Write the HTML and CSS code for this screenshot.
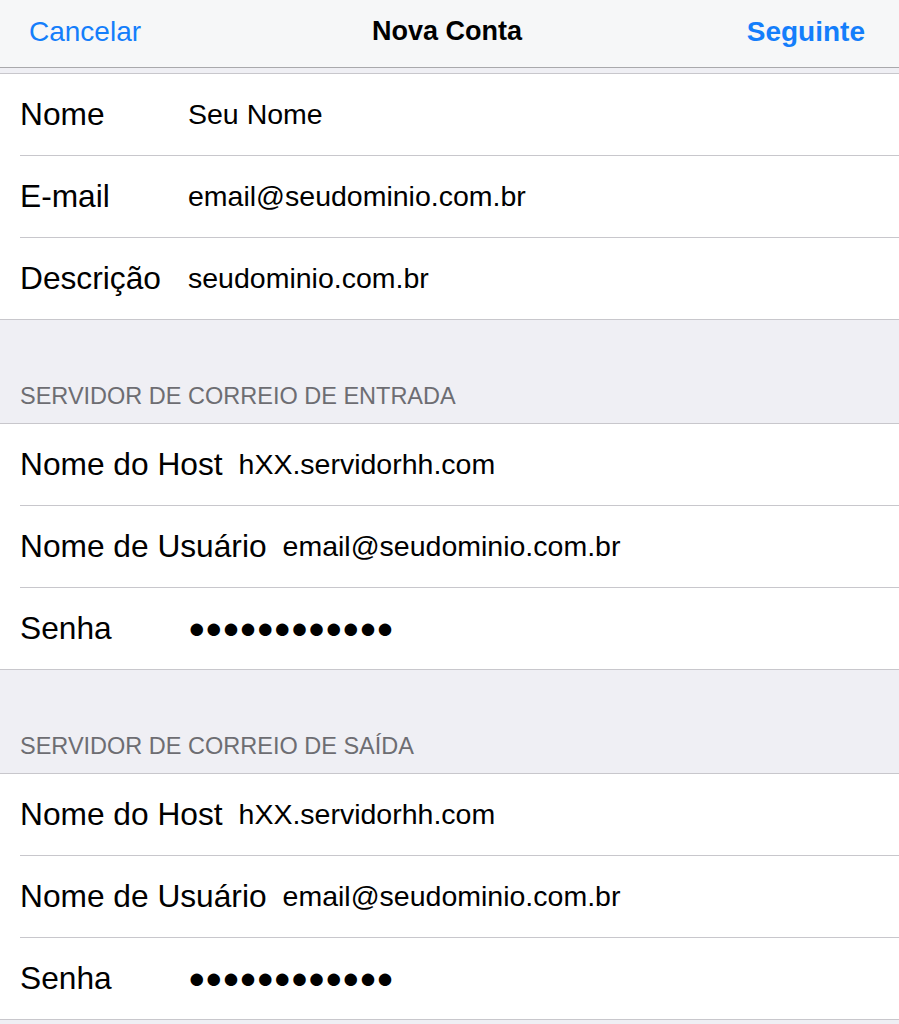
FILE: index.html
```html
<!DOCTYPE html>
<html lang="pt-BR">
<head>
  <meta charset="UTF-8" />
  <meta name="viewport" content="width=device-width, initial-scale=1.0" />
  <title>Nova Conta</title>
  <link rel="stylesheet" href="styles.css">
</head>
<body>
  <!-- barra de navegação -->
  <header class="nav-bar">
    <a href="#" class="nav-btn nav-cancel">Cancelar</a>
    <h1 class="nav-title">Nova Conta</h1>
    <a href="#" class="nav-btn nav-next">Seguinte</a>
  </header>

  <div class="top-gap"></div>

  <!-- dados da conta -->
  <section class="group">
    <div class="row"><div class="row-inner"><span class="label">Nome</span><span class="value">Seu Nome</span></div></div>
    <div class="row"><div class="row-inner"><span class="label">E-mail</span><span class="value">email@seudominio.com.br</span></div></div>
    <div class="row"><div class="row-inner"><span class="label">Descrição</span><span class="value">seudominio.com.br</span></div></div>
  </section>

  <!-- entrada -->
  <h2 class="section-title">SERVIDOR DE CORREIO DE ENTRADA</h2>
  <section class="group">
    <div class="row"><div class="row-inner"><span class="label">Nome do Host</span><span class="value">hXX.servidorhh.com</span></div></div>
    <div class="row"><div class="row-inner"><span class="label">Nome de Usuário</span><span class="value">email@seudominio.com.br</span></div></div>
    <div class="row"><div class="row-inner"><span class="label">Senha</span><span class="value dots">●●●●●●●●●●●●</span></div></div>
  </section>

  <!-- saída -->
  <h2 class="section-title">SERVIDOR DE CORREIO DE SAÍDA</h2>
  <section class="group">
    <div class="row"><div class="row-inner"><span class="label">Nome do Host</span><span class="value">hXX.servidorhh.com</span></div></div>
    <div class="row"><div class="row-inner"><span class="label">Nome de Usuário</span><span class="value">email@seudominio.com.br</span></div></div>
    <div class="row"><div class="row-inner"><span class="label">Senha</span><span class="value dots">●●●●●●●●●●●●</span></div></div>
  </section>
</body>
</html>
```

FILE: styles.css
```css
body{margin:0;background:#efeff4;font-family:"Liberation Sans",Arial,sans-serif;color:#000;}

.nav-bar{display:grid;grid-template-columns:1fr auto 1fr;align-items:center;height:63px;padding:0 34px 4px 29px;background:#f6f7f8;border-bottom:1px solid #a9a9ac;}
.nav-btn{font-size:28px;color:#147efb;text-decoration:none;}
.nav-cancel{justify-self:start;}
.nav-next{justify-self:end;font-weight:bold;}
.nav-title{margin:0;font-size:27px;font-weight:bold;}

.top-gap{height:5px;}

.group{background:#fff;border-top:1px solid #c8c7cc;border-bottom:1px solid #c8c7cc;}
.row{padding-left:20px;}
.row-inner{display:flex;align-items:center;height:81px;border-bottom:1px solid #c8c7cc;}
.row:last-child .row-inner{border-bottom:none;}
.label{min-width:152px;margin-right:16px;font-size:31.7px;white-space:nowrap;}
.value{font-size:28.5px;white-space:nowrap;}
.dots{font-size:29px;line-height:1;letter-spacing:-0.4px;}

.section-title{margin:0;height:26px;padding:63px 20px 14px;font-size:23.5px;font-weight:normal;line-height:26px;color:#6d6d72;}
```
